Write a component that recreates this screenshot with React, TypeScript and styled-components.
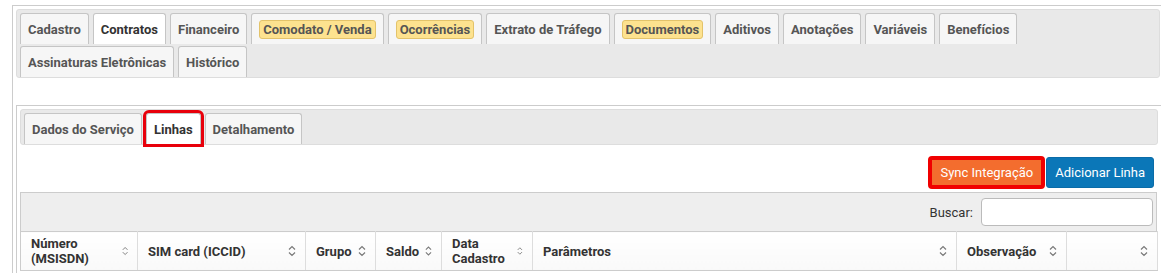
import styled, { createGlobalStyle } from "styled-components";

const GlobalStyle = createGlobalStyle`
	body {
		margin: 0;
		background: #fff;
		font-family: Roboto, "Liberation Sans", Arial, sans-serif;
		font-size: 13px;
		color: #333;
	}
`;

const Page = styled.div`
	padding: 5px 0 0 12px;
	overflow: hidden;
`;

const Panel = styled.div`
	width: 1152px;
	box-sizing: border-box;
	border: 1px solid #ccc;
	padding: 3px;
`;

const TabNav = styled.ul`
	display: flex;
	flex-wrap: wrap;
	gap: 1px 4px;
	margin: 0;
	padding: 3px 3px 0;
	list-style: none;
	background: #e9e9e9;
	border: 1px solid #ddd;
	border-radius: 3px;
`;

const RowBreak = styled.li`
	flex-basis: 100%;
	height: 0;
	margin-top: -1px;
`;

const Tab = styled.li<{ $active?: boolean; $marked?: boolean }>`
	display: flex;
	align-items: center;
	height: 31px;
	box-sizing: border-box;
	padding: 0 7px;
	border: 1px solid #c5c5c5;
	border-bottom: none;
	border-radius: 3px 3px 0 0;
	background: ${(p) => (p.$active ? "#fff" : "#f6f6f6")};
	color: ${(p) => (p.$active ? "#333" : "#555")};
	font-weight: 700;
	font-size: 13px;
	white-space: nowrap;
	outline: ${(p) => (p.$marked ? "3px solid #e8000b" : "none")};
	position: relative;
	z-index: ${(p) => (p.$marked ? 1 : 0)};
`;

const Highlight = styled.span`
	background: #fde28f;
	border: 1px solid #e3c36a;
	border-radius: 3px;
	padding: 1px 3px;
	line-height: 15px;
`;

const TabBody = styled.div`
	padding-top: 27px;
`;

const SubWidget = styled.div`
	border: 1px solid #ccc;
	padding: 3px;
	margin-right: -2px;
`;

const SubContent = styled.div`
	padding: 12px 0 20px;
`;

const Toolbar = styled.div`
	display: flex;
	justify-content: flex-end;
	gap: 2px;
	padding-right: 4px;
	margin-bottom: 4px;
`;

const Button = styled.button<{ $tone: "orange" | "blue"; $marked?: boolean }>`
	height: 31px;
	padding: 0 ${(p) => (p.$tone === "orange" ? "10px" : "8px")};
	border: 1px solid ${(p) => (p.$tone === "orange" ? "#ef6a2c" : "#0a6ca8")};
	border-radius: 3px;
	background: ${(p) => (p.$tone === "orange" ? "#f36d2e" : "#0b77b8")};
	color: #fff;
	font-family: Roboto, "Liberation Sans", Arial, sans-serif;
	font-size: 13px;
	outline: ${(p) => (p.$marked ? "4px solid #f00000" : "none")};
	outline-offset: -3px;
`;

const SearchBar = styled.div`
	display: flex;
	justify-content: flex-end;
	align-items: center;
	gap: 8px;
	height: 39px;
	box-sizing: border-box;
	padding: 0 3px;
	margin-right: 1px;
	background: #eee;
	border: 1px solid #ccc;
	border-bottom: none;
	color: #333;
`;

const SearchInput = styled.input`
	width: 172px;
	height: 28px;
	box-sizing: border-box;
	border: 1px solid #bbb;
	border-radius: 4px;
	background: #fff;
`;

const Table = styled.table`
	width: 1137px;
	table-layout: fixed;
	border-collapse: collapse;
	border-top: 1px solid #ccc;
	border-left: 1px solid #ccc;
`;

const Th = styled.th`
	height: 38px;
	padding: 0 0 0 10px;
	border-right: 1px solid #ddd;
	border-bottom: 1px solid #ccc;
	background: linear-gradient(#fff, #f9f9f9);
	text-align: left;
	font-weight: 700;
	font-size: 13px;
	color: #333;
	line-height: 15px;
`;

const HeadInner = styled.div`
	display: flex;
	align-items: center;
	justify-content: space-between;
	gap: 6px;
	padding-right: 9px;
`;

function SortIcon() {
	return (
		<svg width="8" height="12" viewBox="0 0 8 12" fill="none" stroke="#7a7a7a" strokeWidth="1.2">
			<path d="M1 4.5 L4 1.5 L7 4.5" />
			<path d="M1 7.5 L4 10.5 L7 7.5" />
		</svg>
	);
}

const mainTabs = [
	{ label: "Cadastro" },
	{ label: "Contratos", active: true },
	{ label: "Financeiro" },
	{ label: "Comodato / Venda", highlight: true },
	{ label: "Ocorrências", highlight: true },
	{ label: "Extrato de Tráfego" },
	{ label: "Documentos", highlight: true },
	{ label: "Aditivos" },
	{ label: "Anotações" },
	{ label: "Variáveis" },
	{ label: "Benefícios" },
];

const secondRow = ["Assinaturas Eletrônicas", "Histórico"];

const columns = [
	{ label: "Número (MSISDN)", width: 117 },
	{ label: "SIM card (ICCID)", width: 168 },
	{ label: "Grupo", width: 70 },
	{ label: "Saldo", width: 66 },
	{ label: "Data Cadastro", width: 91 },
	{ label: "Parâmetros", width: 424 },
	{ label: "Observação", width: 110 },
	{ label: "", width: 91 },
];

export default function App() {
	return (
		<>
			<GlobalStyle />
			<Page>
				<Panel>
					<TabNav>
						{mainTabs.map((t) => (
							<Tab key={t.label} $active={t.active}>
								{t.highlight ? <Highlight>{t.label}</Highlight> : t.label}
							</Tab>
						))}
						<RowBreak />
						{secondRow.map((l) => (
							<Tab key={l}>{l}</Tab>
						))}
					</TabNav>
					<TabBody>
						<SubWidget>
							<TabNav>
								<Tab>Dados do Serviço</Tab>
								<Tab $active $marked>
									Linhas
								</Tab>
								<Tab>Detalhamento</Tab>
							</TabNav>
							<SubContent>
								<Toolbar>
									<Button $tone="orange" $marked>
										Sync Integração
									</Button>
									<Button $tone="blue">Adicionar Linha</Button>
								</Toolbar>
								<SearchBar>
									<label>Buscar:</label>
									<SearchInput type="search" />
								</SearchBar>
								<Table>
									<colgroup>
										{columns.map((c, i) => (
											<col key={i} style={{ width: c.width }} />
										))}
									</colgroup>
									<thead>
										<tr>
											{columns.map((c, i) => (
												<Th key={i}>
													<HeadInner>
														<span>{c.label}</span>
														<SortIcon />
													</HeadInner>
												</Th>
											))}
										</tr>
									</thead>
								</Table>
							</SubContent>
						</SubWidget>
					</TabBody>
				</Panel>
			</Page>
		</>
	);
}
